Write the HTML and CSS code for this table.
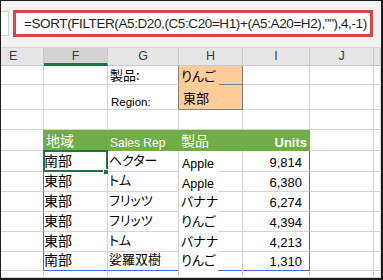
FILE: index.html
```html
<!DOCTYPE html>
<html>
<head>
<meta charset="utf-8">
<link rel="stylesheet" href="styles.css">
</head>
<body>
<div class="frame">
  <div class="fbar">
    <div class="namebox"></div>
    <div class="formula">=SORT(FILTER(A5:D20,(C5:C20=H1)+(A5:A20=H2),""),4,-1)</div>
  </div>
  <div class="row hdr">
    <div class="c ce hl">E</div>
    <div class="c cf hl hsel">F</div>
    <div class="c cg hl">G</div>
    <div class="c ch hl">H</div>
    <div class="c ci hl">I</div>
    <div class="c cj hl">J</div>
    <div class="c ck hl"></div>
  </div>
  <div class="row r1">
    <div class="c ce"></div>
    <div class="c cf"></div>
    <div class="c cg obl jp13 pb1 pl2">製品:</div>
    <div class="c ch orange h1 jp13 pb1 pl2">りんご</div>
    <div class="c ci"></div>
    <div class="c cj"></div>
    <div class="c ck"></div>
  </div>
  <div class="row r2">
    <div class="c ce"></div>
    <div class="c cf"></div>
    <div class="c cg obl lab pl3">Region:</div>
    <div class="c ch orange h2 jp13 pb3 pl4">東部</div>
    <div class="c ci"></div>
    <div class="c cj"></div>
    <div class="c ck"></div>
  </div>
  <div class="row r3">
    <div class="c ce"></div>
    <div class="c cf"></div>
    <div class="c cg"></div>
    <div class="c ch"></div>
    <div class="c ci"></div>
    <div class="c cj"></div>
    <div class="c ck"></div>
  </div>
  <div class="row r4">
    <div class="c ce gedge"></div>
    <div class="c cf green jp14 pb2 pl2">地域</div>
    <div class="c cg green th pl2">Sales Rep</div>
    <div class="c ch green jp14 pb2 pl2">製品</div>
    <div class="c ci green units">Units</div>
    <div class="c cj"></div>
    <div class="c ck"></div>
  </div>
  <div class="row r5">
    <div class="c ce bedge"></div>
    <div class="c cf jp14 pb3 active">南部</div>
    <div class="c cg jp13 pb3 pl1">ヘクター</div>
    <div class="c ch hd apple">Apple</div>
    <div class="c ci bedge num">9,814</div>
    <div class="c cj"></div>
    <div class="c ck"></div>
  </div>
  <div class="row r6">
    <div class="c ce bedge"></div>
    <div class="c cf jp14 pb3">東部</div>
    <div class="c cg jp13 pb3 pl1">トム</div>
    <div class="c ch hd apple">Apple</div>
    <div class="c ci bedge num">6,380</div>
    <div class="c cj"></div>
    <div class="c ck"></div>
  </div>
  <div class="row r7">
    <div class="c ce bedge"></div>
    <div class="c cf jp14 pb3">東部</div>
    <div class="c cg jp13 pb3 pl1">フリッツ</div>
    <div class="c ch hd jp13 pb3 pl2">バナナ</div>
    <div class="c ci bedge num">6,274</div>
    <div class="c cj"></div>
    <div class="c ck"></div>
  </div>
  <div class="row r8">
    <div class="c ce bedge"></div>
    <div class="c cf jp14 pb3">東部</div>
    <div class="c cg jp13 pb3 pl1">フリッツ</div>
    <div class="c ch hd jp13 pb3 pl2">りんご</div>
    <div class="c ci bedge num">4,394</div>
    <div class="c cj"></div>
    <div class="c ck"></div>
  </div>
  <div class="row r9">
    <div class="c ce bedge"></div>
    <div class="c cf jp14 pb3">東部</div>
    <div class="c cg jp13 pb3 pl1">トム</div>
    <div class="c ch hd jp13 pb3 pl2">バナナ</div>
    <div class="c ci bedge num">4,213</div>
    <div class="c cj"></div>
    <div class="c ck"></div>
  </div>
  <div class="row r10">
    <div class="c ce bedge"></div>
    <div class="c cf jp14 pb3 bbot">南部</div>
    <div class="c cg jp13 pb3 pl1 bbot">娑羅双樹</div>
    <div class="c ch hd hdlast jp13 pb3 pl2">りんご</div>
    <div class="c ci bedge bbot num">1,310</div>
    <div class="c cj"></div>
    <div class="c ck"></div>
  </div>
  <div class="row r11">
    <div class="c ce"></div>
    <div class="c cf"></div>
    <div class="c cg"></div>
    <div class="c ch"></div>
    <div class="c ci"></div>
    <div class="c cj"></div>
    <div class="c ck"></div>
  </div>
</div>
</body>
</html>
```
FILE: styles.css
```css
html, body {
  margin: 0;
  padding: 0;
  background: #fff;
}

.frame {
  width: 383px;
  height: 280px;
  box-sizing: border-box;
  border-style: solid;
  border-color: #1c1c1c;
  border-width: 1px 2px 2px 1px;
  background: #fff;
  overflow: hidden;
  font-family: "Liberation Sans", Arial, sans-serif;
  color: #000;
}

.fbar {
  height: 47px;
  box-sizing: border-box;
  background: #f3f3f3;
  border-bottom: 1px solid #d6d6d6;
  display: flex;
  align-items: flex-start;
  padding-top: 9px;
  gap: 4px;
}

.namebox {
  width: 8px;
  height: 25px;
  margin-top: 1px;
  box-sizing: border-box;
  background: #fff;
  border: 1px solid #d2d2d2;
  border-left: 0;
}

.formula {
  width: 360px;
  height: 27px;
  box-sizing: border-box;
  border: 3px solid #e5423b;
  background: #fff;
  padding-left: 8px;
  display: flex;
  align-items: center;
  font-family: "Liberation Sans", Arial, sans-serif;
  font-size: 13.5px;
  letter-spacing: -0.4px;
  color: #1e1e1e;
  white-space: nowrap;
}

.row {
  display: flex;
}

.hdr { height: 18px; }
.r1 { height: 19px; }
.r2 { height: 25px; }
.r3 { height: 20px; }
.r4 { height: 21px; }
.r5 { height: 21px; }
.r6, .r7, .r8, .r9 { height: 20px; }
.r10 { height: 19px; }
.r11 { height: 7px; }

.c {
  box-sizing: border-box;
  border-right: 1px solid #d4d4d4;
  border-bottom: 1px solid #d4d4d4;
  display: flex;
  align-items: flex-end;
  white-space: nowrap;
  overflow: visible;
  flex: none;
}

.ce { width: 43px; }
.cf { width: 64px; }
.cg { width: 71px; }
.ch { width: 64px; }
.ci { width: 67px; }
.cj { width: 64px; }
.ck { width: 7px; }

/* column header row */
.hl {
  background: #e6e6e6;
  border-right-color: #c9c9c9;
  border-bottom-color: #c9c9c9;
  justify-content: center;
  font-size: 12.5px;
  line-height: 14px;
  color: #3b3b3b;
  padding-bottom: 2px;
}
.hdr .ce {
  justify-content: flex-start;
  padding-left: 8px;
}
.hsel {
  background: #d3d3d3;
  border-bottom: 3px solid #217346;
  padding-bottom: 0;
}

/* text helpers */
.jp13 {
  font-family: "Noto Sans CJK JP", sans-serif;
  font-size: 13px;
  line-height: 16px;
  font-feature-settings: "palt";
}
.jp14 {
  font-family: "Noto Sans CJK JP", sans-serif;
  font-size: 14px;
  line-height: 16px;
}
.pb1 { padding-bottom: 1px; }
.pb2 { padding-bottom: 2px; }
.pb3 { padding-bottom: 3px; }
.pl1 { padding-left: 1px; }
.pl2 { padding-left: 2px; }
.pl3 { padding-left: 3px; }
.pl4 { padding-left: 4px; }

.lab {
  font-size: 11.5px;
  line-height: 14px;
}

/* criteria block */
.obl { border-right-color: #808080; }
.orange {
  background-color: #ffcc99;
  border-right-color: #808080;
}
.h1 {
  border-bottom: 0;
  background-image: linear-gradient(#808080, #808080);
  background-size: 23px 1px;
  background-position: right bottom;
  background-repeat: no-repeat;
}
.h2 { border-bottom-color: #808080; }

/* table header */
.gedge { border-right-color: #70ad47; }
.green {
  background: #70ad47;
  border-right-color: #70ad47;
  border-bottom-color: #70ad47;
  color: #fff;
}
.th {
  font-size: 12px;
  line-height: 14px;
}
.units {
  justify-content: flex-end;
  padding-right: 2px;
  font-weight: bold;
  font-size: 13px;
  line-height: 14px;
}

/* table body */
.bedge { border-right-color: #4472c4; }
.bbot { border-bottom-color: #4472c4; }

.hd {
  border-bottom: 0;
  background-image: linear-gradient(#d4d4d4, #d4d4d4);
  background-size: 24px 1px;
  background-position: right bottom;
  background-repeat: no-repeat;
}
.hdlast {
  background-image: linear-gradient(#4472c4, #4472c4);
}

.apple {
  font-size: 12.5px;
  line-height: 15px;
  padding-left: 3px;
}

.num {
  justify-content: flex-end;
  padding-right: 7px;
  padding-bottom: 1px;
  font-size: 13px;
  line-height: 15px;
}

.active {
  position: relative;
}
.active::before {
  content: "";
  position: absolute;
  top: -1px;
  left: -1px;
  right: -1px;
  bottom: -1px;
  border: 2px solid #217346;
}
.active::after {
  content: "";
  position: absolute;
  right: -2px;
  bottom: -4px;
  width: 6px;
  height: 6px;
  box-sizing: border-box;
  background: #217346;
  border: 1px solid #fff;
}
```
